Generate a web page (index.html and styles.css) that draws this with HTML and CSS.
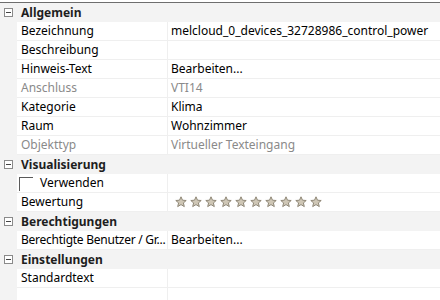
FILE: index.html
```html
<!DOCTYPE html>
<html>
<head>
<meta charset="utf-8">
<link rel="stylesheet" href="styles.css">
</head>
<body>
<div class="grid">
  <div class="cat"><span class="toggle"></span><span class="cat-name">Allgemein</span></div>
  <div class="row"><div class="gut"></div><div class="lbl">Bezeichnung</div><div class="val">melcloud_0_devices_32728986_control_power</div></div>
  <div class="row"><div class="gut"></div><div class="lbl">Beschreibung</div><div class="val"></div></div>
  <div class="row"><div class="gut"></div><div class="lbl">Hinweis-Text</div><div class="val">Bearbeiten...</div></div>
  <div class="row dis"><div class="gut"></div><div class="lbl">Anschluss</div><div class="val">VTI14</div></div>
  <div class="row"><div class="gut"></div><div class="lbl">Kategorie</div><div class="val">Klima</div></div>
  <div class="row"><div class="gut"></div><div class="lbl">Raum</div><div class="val">Wohnzimmer</div></div>
  <div class="row dis"><div class="gut"></div><div class="lbl">Objekttyp</div><div class="val">Virtueller Texteingang</div></div>
  <div class="cat"><span class="toggle"></span><span class="cat-name">Visualisierung</span></div>
  <div class="row"><div class="gut"></div><div class="lbl chk-lbl"><span class="chk"></span>Verwenden</div><div class="val"></div></div>
  <div class="row"><div class="gut"></div><div class="lbl">Bewertung</div><div class="val stars">
    <svg viewBox="0 0 12 12" class="star"><path d="M6 0.8 L7.5 4.2 L11.2 4.5 L8.4 6.9 L9.3 10.6 L6 8.6 L2.7 10.6 L3.6 6.9 L0.8 4.5 L4.5 4.2 Z"/></svg>
    <svg viewBox="0 0 12 12" class="star"><path d="M6 0.8 L7.5 4.2 L11.2 4.5 L8.4 6.9 L9.3 10.6 L6 8.6 L2.7 10.6 L3.6 6.9 L0.8 4.5 L4.5 4.2 Z"/></svg>
    <svg viewBox="0 0 12 12" class="star"><path d="M6 0.8 L7.5 4.2 L11.2 4.5 L8.4 6.9 L9.3 10.6 L6 8.6 L2.7 10.6 L3.6 6.9 L0.8 4.5 L4.5 4.2 Z"/></svg>
    <svg viewBox="0 0 12 12" class="star"><path d="M6 0.8 L7.5 4.2 L11.2 4.5 L8.4 6.9 L9.3 10.6 L6 8.6 L2.7 10.6 L3.6 6.9 L0.8 4.5 L4.5 4.2 Z"/></svg>
    <svg viewBox="0 0 12 12" class="star"><path d="M6 0.8 L7.5 4.2 L11.2 4.5 L8.4 6.9 L9.3 10.6 L6 8.6 L2.7 10.6 L3.6 6.9 L0.8 4.5 L4.5 4.2 Z"/></svg>
    <svg viewBox="0 0 12 12" class="star"><path d="M6 0.8 L7.5 4.2 L11.2 4.5 L8.4 6.9 L9.3 10.6 L6 8.6 L2.7 10.6 L3.6 6.9 L0.8 4.5 L4.5 4.2 Z"/></svg>
    <svg viewBox="0 0 12 12" class="star"><path d="M6 0.8 L7.5 4.2 L11.2 4.5 L8.4 6.9 L9.3 10.6 L6 8.6 L2.7 10.6 L3.6 6.9 L0.8 4.5 L4.5 4.2 Z"/></svg>
    <svg viewBox="0 0 12 12" class="star"><path d="M6 0.8 L7.5 4.2 L11.2 4.5 L8.4 6.9 L9.3 10.6 L6 8.6 L2.7 10.6 L3.6 6.9 L0.8 4.5 L4.5 4.2 Z"/></svg>
    <svg viewBox="0 0 12 12" class="star"><path d="M6 0.8 L7.5 4.2 L11.2 4.5 L8.4 6.9 L9.3 10.6 L6 8.6 L2.7 10.6 L3.6 6.9 L0.8 4.5 L4.5 4.2 Z"/></svg>
    <svg viewBox="0 0 12 12" class="star"><path d="M6 0.8 L7.5 4.2 L11.2 4.5 L8.4 6.9 L9.3 10.6 L6 8.6 L2.7 10.6 L3.6 6.9 L0.8 4.5 L4.5 4.2 Z"/></svg>
  </div></div>
  <div class="cat"><span class="toggle"></span><span class="cat-name">Berechtigungen</span></div>
  <div class="row"><div class="gut"></div><div class="lbl narrow">Berechtigte Benutzer / Gr...</div><div class="val">Bearbeiten...</div></div>
  <div class="cat"><span class="toggle"></span><span class="cat-name">Einstellungen</span></div>
  <div class="row"><div class="gut"></div><div class="lbl">Standardtext</div><div class="val"></div></div>
  <div class="row filler"><div class="gut"></div><div class="lbl"></div><div class="val"></div></div>
</div>
</body>
</html>
```
FILE: styles.css
```css
html, body {
  margin: 0;
  padding: 0;
  background: #ffffff;
}
body {
  font-family: "Noto Sans", "Open Sans", sans-serif;
  font-size: 12px;
  color: #000000;
  padding-top: 2px;
}
.grid {
  border-top: 1px solid #6e6e6e;
  display: flex;
  flex-direction: column;
}
.cat {
  height: 19px;
  background: #f3f3f3;
  display: flex;
  align-items: center;
}
.toggle {
  width: 7px;
  height: 7px;
  border: 1px solid #8a8a8a;
  margin-left: 4px;
  margin-right: 8px;
  position: relative;
  background: #fff;
}
.toggle::after {
  content: "";
  position: absolute;
  left: 1px;
  right: 1px;
  top: 3px;
  height: 1px;
  background: #444;
}
.cat-name {
  font-weight: bold;
  color: #1e1e1e;
}
.row {
  display: grid;
  grid-template-columns: 17px 151px 1fr;
  height: 19px;
}
.gut {
  background: #f3f3f3;
}
.lbl, .val {
  border-bottom: 1px solid #efefef;
  display: flex;
  align-items: center;
  white-space: nowrap;
  overflow: hidden;
  line-height: 18px;
}
.lbl {
  padding-left: 4px;
  border-right: 1px solid #efefef;
  display: block;
}
.narrow {
  letter-spacing: -0.25px;
}
.val {
  padding-left: 3px;
}
.dis .lbl, .dis .val {
  color: #8a8a8a;
}
.chk-lbl {
  display: flex;
  align-items: center;
  padding-left: 2px;
}
.chk {
  width: 13px;
  height: 13px;
  border-top: 1px solid #5a5a5a;
  border-left: 1px solid #5a5a5a;
  margin-right: 7px;
  margin-top: 2px;
  box-sizing: content-box;
}
.stars {
  gap: 3px;
  padding-left: 7px;
}
.star {
  width: 12px;
  height: 12px;
  fill: #cfc7b6;
  stroke: #8f8777;
  stroke-width: 1;
  stroke-linejoin: round;
}
.filler .lbl, .filler .val {
  border-bottom: none;
}
.filler {
  height: 20px;
}
```
